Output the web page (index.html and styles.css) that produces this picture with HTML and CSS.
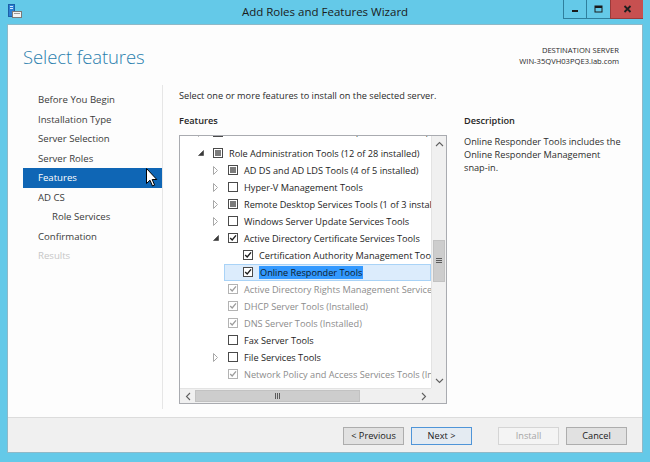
FILE: index.html
```html
<!DOCTYPE html>
<html>
<head>
<meta charset="utf-8">
<title>Add Roles and Features Wizard</title>
<link rel="stylesheet" href="styles.css">
</head>
<body>
<div class="window">
  <div class="titlebar">
    <div class="tb-left">
      <svg class="app-icon" width="14" height="14" viewBox="0 0 14 14">
        <rect x="0.5" y="0.5" width="6" height="12" fill="#2d7fd3" stroke="#1b5fa8"/>
        <rect x="2" y="2" width="3" height="1" fill="#cfe6ff"/>
        <rect x="2" y="4" width="3" height="1" fill="#cfe6ff"/>
        <rect x="4.5" y="7.5" width="9" height="6" fill="#f4f4f4" stroke="#7a7a7a"/>
        <rect x="6" y="9" width="6" height="1" fill="#9a9a9a"/>
      </svg>
    </div>
    <div class="title">Add Roles and Features Wizard</div>
    <div class="caption-btns">
      <div class="cbtn cmin"><svg width="8" height="8" viewBox="0 0 8 8"><rect x="1" y="5" width="6" height="2" fill="#1a1a1a"/></svg></div>
      <div class="cbtn cmax"><svg width="9" height="8" viewBox="0 0 9 8"><rect x="1" y="1" width="7" height="6" fill="none" stroke="#1a1a1a" stroke-width="1"/><rect x="1" y="1" width="7" height="2" fill="#1a1a1a"/></svg></div>
      <div class="cbtn cclose"><svg width="9" height="8" viewBox="0 0 9 8"><path d="M1.5 1 L7.5 7 M7.5 1 L1.5 7" stroke="#1f1f1f" stroke-width="1.8"/></svg></div>
    </div>
  </div>

  <div class="client">
    <div class="header">
      <h1 class="page-title">Select features</h1>
      <div class="dest">
        <div>DESTINATION SERVER</div>
        <div>WIN-35QVH03PQE3.lab.com</div>
      </div>
    </div>

    <div class="body">
      <nav class="nav">
        <div class="nav-item">Before You Begin</div>
        <div class="nav-item">Installation Type</div>
        <div class="nav-item">Server Selection</div>
        <div class="nav-item">Server Roles</div>
        <div class="nav-item active">Features</div>
        <div class="nav-item">AD CS</div>
        <div class="nav-item sub">Role Services</div>
        <div class="nav-item">Confirmation</div>
        <div class="nav-item disabled">Results</div>
      </nav>

      <main class="main">
        <p class="intro">Select one or more features to install on the selected server.</p>
        <div class="cols">
          <div class="features-col">
            <div class="label">Features</div>
            <div class="treebox">
              <div class="viewport">
                <div class="rows">
                  <div class="row l0 partial">
                    <span class="exp"><svg width="6" height="9" viewBox="0 0 6 9"><path d="M0.5 0.5 L4.5 4.5 L0.5 8.5 Z" fill="none" stroke="#a8a8a8"/></svg></span>
                    <span class="cb ind"><i></i></span>
                    <span class="txt">Feature Administration Tools (5 of 31 installed)</span>
                  </div>
                  <div class="row l0">
                    <span class="exp"><svg width="6" height="6" viewBox="0 0 6 6"><path d="M5.5 0.5 L5.5 5.5 L0.5 5.5 Z" fill="#3a3a3a" stroke="#3a3a3a" stroke-width="0.6"/></svg></span>
                    <span class="cb ind"><i></i></span>
                    <span class="txt">Role Administration Tools (12 of 28 installed)</span>
                  </div>
                  <div class="row l1">
                    <span class="exp"><svg width="6" height="9" viewBox="0 0 6 9"><path d="M0.5 0.5 L4.5 4.5 L0.5 8.5 Z" fill="none" stroke="#a8a8a8"/></svg></span>
                    <span class="cb ind"><i></i></span>
                    <span class="txt">AD DS and AD LDS Tools (4 of 5 installed)</span>
                  </div>
                  <div class="row l1">
                    <span class="exp"><svg width="6" height="9" viewBox="0 0 6 9"><path d="M0.5 0.5 L4.5 4.5 L0.5 8.5 Z" fill="none" stroke="#a8a8a8"/></svg></span>
                    <span class="cb"></span>
                    <span class="txt">Hyper-V Management Tools</span>
                  </div>
                  <div class="row l1">
                    <span class="exp"><svg width="6" height="9" viewBox="0 0 6 9"><path d="M0.5 0.5 L4.5 4.5 L0.5 8.5 Z" fill="none" stroke="#a8a8a8"/></svg></span>
                    <span class="cb ind"><i></i></span>
                    <span class="txt">Remote Desktop Services Tools (1 of 3 installed)</span>
                  </div>
                  <div class="row l1">
                    <span class="exp"><svg width="6" height="9" viewBox="0 0 6 9"><path d="M0.5 0.5 L4.5 4.5 L0.5 8.5 Z" fill="none" stroke="#a8a8a8"/></svg></span>
                    <span class="cb"></span>
                    <span class="txt">Windows Server Update Services Tools</span>
                  </div>
                  <div class="row l1">
                    <span class="exp"><svg width="6" height="6" viewBox="0 0 6 6"><path d="M5.5 0.5 L5.5 5.5 L0.5 5.5 Z" fill="#3a3a3a" stroke="#3a3a3a" stroke-width="0.6"/></svg></span>
                    <span class="cb"><svg width="8" height="8" viewBox="0 0 8 8"><path d="M1.2 4 L3.2 6 L7 1.4" fill="none" stroke="#1e1e1e" stroke-width="1.4"/></svg></span>
                    <span class="txt">Active Directory Certificate Services Tools</span>
                  </div>
                  <div class="row l2">
                    <span class="exp"></span>
                    <span class="cb"><svg width="8" height="8" viewBox="0 0 8 8"><path d="M1.2 4 L3.2 6 L7 1.4" fill="none" stroke="#1e1e1e" stroke-width="1.4"/></svg></span>
                    <span class="txt">Certification Authority Management Tools</span>
                  </div>
                  <div class="row l2 selected">
                    <span class="exp"></span>
                    <span class="cb"><svg width="8" height="8" viewBox="0 0 8 8"><path d="M1.2 4 L3.2 6 L7 1.4" fill="none" stroke="#1e1e1e" stroke-width="1.4"/></svg></span>
                    <span class="txt"><span class="sel-text">Online Responder Tools</span></span>
                  </div>
                  <div class="row l1 dis">
                    <span class="exp"></span>
                    <span class="cb"><svg width="8" height="8" viewBox="0 0 8 8"><path d="M1.2 4 L3.2 6 L7 1.4" fill="none" stroke="#9d9d9d" stroke-width="1.3"/></svg></span>
                    <span class="txt">Active Directory Rights Management Services Tools (Installed)</span>
                  </div>
                  <div class="row l1 dis">
                    <span class="exp"></span>
                    <span class="cb"><svg width="8" height="8" viewBox="0 0 8 8"><path d="M1.2 4 L3.2 6 L7 1.4" fill="none" stroke="#9d9d9d" stroke-width="1.3"/></svg></span>
                    <span class="txt">DHCP Server Tools (Installed)</span>
                  </div>
                  <div class="row l1 dis">
                    <span class="exp"></span>
                    <span class="cb"><svg width="8" height="8" viewBox="0 0 8 8"><path d="M1.2 4 L3.2 6 L7 1.4" fill="none" stroke="#9d9d9d" stroke-width="1.3"/></svg></span>
                    <span class="txt">DNS Server Tools (Installed)</span>
                  </div>
                  <div class="row l1">
                    <span class="exp"></span>
                    <span class="cb"></span>
                    <span class="txt">Fax Server Tools</span>
                  </div>
                  <div class="row l1">
                    <span class="exp"><svg width="6" height="9" viewBox="0 0 6 9"><path d="M0.5 0.5 L4.5 4.5 L0.5 8.5 Z" fill="none" stroke="#a8a8a8"/></svg></span>
                    <span class="cb"></span>
                    <span class="txt">File Services Tools</span>
                  </div>
                  <div class="row l1 dis">
                    <span class="exp"></span>
                    <span class="cb"><svg width="8" height="8" viewBox="0 0 8 8"><path d="M1.2 4 L3.2 6 L7 1.4" fill="none" stroke="#9d9d9d" stroke-width="1.3"/></svg></span>
                    <span class="txt">Network Policy and Access Services Tools (Installed)</span>
                  </div>
                </div>
              </div>
              <div class="vscroll">
                <div class="sb-btn"><svg width="9" height="6" viewBox="0 0 9 6"><path d="M1 5 L4.5 1.5 L8 5" fill="none" stroke="#606060" stroke-width="1.1"/></svg></div>
                <div class="vtrack">
                  <div class="vthumb"><svg width="6" height="6" viewBox="0 0 6 6"><path d="M0 0.5 H6 M0 2.5 H6 M0 4.5 H6" stroke="#5a5a5a" stroke-width="1"/></svg></div>
                </div>
                <div class="sb-btn"><svg width="9" height="6" viewBox="0 0 9 6"><path d="M1 1 L4.5 4.5 L8 1" fill="none" stroke="#606060" stroke-width="1.1"/></svg></div>
              </div>
              <div class="hscroll">
                <div class="sb-btn"><svg width="6" height="9" viewBox="0 0 6 9"><path d="M5 1 L1.5 4.5 L5 8" fill="none" stroke="#606060" stroke-width="1.1"/></svg></div>
                <div class="htrack">
                  <div class="hthumb"><svg width="6" height="6" viewBox="0 0 6 6"><path d="M0.5 0 V6 M2.5 0 V6 M4.5 0 V6" stroke="#5a5a5a" stroke-width="1"/></svg></div>
                </div>
                <div class="sb-btn"><svg width="6" height="9" viewBox="0 0 6 9"><path d="M1 1 L4.5 4.5 L1 8" fill="none" stroke="#606060" stroke-width="1.1"/></svg></div>
              </div>
              <div class="corner"></div>
            </div>
          </div>
          <div class="desc-col">
            <div class="label">Description</div>
            <p class="desc">Online Responder Tools includes the Online Responder Management <span class="nowrap">snap-in.</span></p>
          </div>
        </div>
      </main>
    </div>

    <div class="footer">
      <button class="btn">&lt; Previous</button>
      <button class="btn default">Next &gt;</button>
      <button class="btn disabled-btn">Install</button>
      <button class="btn">Cancel</button>
    </div>
  </div>

  <svg class="cursor" width="12" height="19" viewBox="0 0 12 19">
    <path d="M0.5 0.5 L0.5 15.5 L4 12.2 L6.5 18 L8.6 17.1 L6.2 11.5 L10.8 11.5 Z" fill="#fff" stroke="#000" stroke-width="1" stroke-linejoin="round"/>
  </svg>
</div>
</body>
</html>
```

FILE: styles.css
```css
* { box-sizing: border-box; }
html, body { margin: 0; padding: 0; }
body {
  width: 650px;
  height: 462px;
  overflow: hidden;
  background: #64c9e8;
  font-family: "Open Sans", "Noto Sans", "DejaVu Sans", sans-serif;
}

.window {
  position: relative;
  width: 650px;
  height: 462px;
  background: #64c9e8;
  padding: 0 7px 9px 7px;
  display: flex;
  flex-direction: column;
}

/* Title bar */
.titlebar {
  height: 24px;
  flex: none;
  display: grid;
  grid-template-columns: 1fr auto 1fr;
  align-items: start;
}
.tb-left { display: flex; }
.app-icon { margin: 4px 0 0 1px; display: block; }
.title {
  font-size: 11.5px;
  line-height: 16px;
  padding-top: 4px;
  color: #1b1b1b;
  white-space: nowrap;
}
.caption-btns {
  justify-self: end;
  display: flex;
  height: 19px;
}
.cbtn {
  height: 19px;
  display: flex;
  align-items: center;
  justify-content: center;
  border-bottom: 1px solid #2f7f9d;
  border-left: 1px solid #2f7f9d;
}
.cmin { width: 23px; }
.cmax { width: 24px; }
.cclose { width: 33px; background: #c75050; border-color: #9a3a3a; }

/* Client area */
.client {
  flex: 1;
  display: flex;
  flex-direction: column;
  background: #fdfdfd;
  border: 1px solid #8fb9c8;
}

.header {
  height: 60px;
  flex: none;
  display: flex;
  justify-content: space-between;
  align-items: flex-start;
  padding: 0 23px 0 15px;
}
.page-title {
  margin: 20px 0 0 0;
  font-size: 18.5px;
  line-height: 24px;
  font-weight: 300;
  color: #2b7fad;
  letter-spacing: -0.1px;
}
.dest {
  margin-top: 20px;
  text-align: right;
  font-size: 7.6px;
  line-height: 10.5px;
  color: #2a2a2a;
}

.body {
  flex: 1;
  display: flex;
  min-height: 0;
}

/* Left nav */
.nav {
  width: 155px;
  flex: none;
  padding-top: 5px;
  margin-bottom: 8px;
  border-right: 1px solid #e6e6e6;
}
.nav-item {
  height: 19.5px;
  line-height: 19.5px;
  margin-left: 15px;
  padding-left: 15px;
  font-size: 9.6px;
  color: #3b3b3b;
  white-space: nowrap;
}
.nav-item.sub { padding-left: 29px; }
.nav-item.active { background: #0f66b5; color: #fff; }
.nav-item.disabled { color: #c6c6c6; }

/* Main */
.main {
  flex: 1;
  padding: 4px 0 0 16px;
  font-size: 9.2px;
  color: #262626;
}
.intro {
  margin: 0;
  line-height: 13px;
  font-size: 9.2px;
  color: #2a2a2a;
}
.cols {
  display: flex;
  gap: 17px;
  margin-top: 11.5px;
}
.features-col { width: 268px; flex: none; }
.label {
  font-weight: 600;
  font-size: 9.2px;
  line-height: 13px;
  color: #262626;
}

.treebox {
  margin-top: 8.5px;
  width: 268px;
  height: 269px;
  border: 1px solid #a9abb0;
  display: grid;
  grid-template-columns: 1fr 15px;
  grid-template-rows: 1fr 15px;
  background: #fff;
}
.viewport {
  overflow: hidden;
  position: relative;
}
.rows { margin-top: -8.5px; }
.row {
  display: flex;
  align-items: center;
  height: 17px;
  white-space: nowrap;
  font-size: 9.2px;
  color: #1e1e1e;
}
.row.l0 { margin-left: 14px; }
.row.l1 { margin-left: 29px; }
.row.l2 { margin-left: 44px; }
.row.partial > * { transform: translateY(-4px); }
.exp {
  width: 19px;
  flex: none;
  display: flex;
  align-items: center;
  padding-left: 4px;
}
.exp svg { display: block; }
.cb {
  width: 10px;
  height: 10px;
  flex: none;
  border: 1px solid #4a4a4a;
  background: #fff;
  display: flex;
  align-items: center;
  justify-content: center;
}
.cb svg { display: block; }
.cb.ind i {
  display: block;
  width: 6px;
  height: 6px;
  background: #7c7c7c;
}
.txt { margin-left: 6px; }
.row.dis { color: #8c8c8c; }
.row.dis .cb { border-color: #b3b3b3; }
.row.selected {
  background: #dcecfc;
  box-shadow: inset 0 0 0 1px #a9d3f7;
}
.sel-text {
  background: #3399ff;
  color: #0d1a2b;
  padding: 0 1px;
}

/* Scrollbars */
.vscroll {
  display: flex;
  flex-direction: column;
  background: #f0f0f0;
  border-left: 1px solid #e3e3e3;
}
.sb-btn {
  flex: none;
  width: 14px;
  height: 15px;
  display: flex;
  align-items: center;
  justify-content: center;
}
.vtrack { flex: 1; }
.vthumb {
  margin: 89px 1px 0 1px;
  height: 42px;
  background: #cdcdcd;
  border: 1px solid #c2c2c2;
  display: flex;
  align-items: center;
  justify-content: center;
}
.hscroll {
  display: flex;
  background: #f0f0f0;
  border-top: 1px solid #e3e3e3;
}
.hscroll .sb-btn { width: 15px; height: 14px; }
.htrack { flex: 1; display: flex; }
.hthumb {
  margin: 1px 0;
  width: 165px;
  background: #cdcdcd;
  border: 1px solid #c2c2c2;
  display: flex;
  align-items: center;
  justify-content: center;
}
.corner { background: #f0f0f0; }

/* Description */
.desc-col { width: 170px; flex: none; }
.desc {
  margin: 8px 0 0 0;
  font-size: 9.2px;
  line-height: 13px;
  color: #2e2e2e;
}
.nowrap { white-space: nowrap; }

/* Footer */
.footer {
  height: 35px;
  flex: none;
  background: #f0f0f0;
  border-top: 1px solid #dcdcdc;
  display: flex;
  justify-content: flex-end;
  align-items: flex-start;
  padding: 9px 15px 0 0;
}
.btn {
  width: 61px;
  height: 18px;
  padding: 0;
  margin: 0 0 0 7px;
  font-family: "Open Sans", "Noto Sans", sans-serif;
  font-size: 9.2px;
  line-height: 16px;
  color: #1a1a1a;
  background: #e1e1e1;
  border: 1px solid #adadad;
  border-radius: 0;
}
.btn.default { border-color: #4f95d8; background: #e4ebf2; }
.btn.disabled-btn {
  margin-left: 26px;
  color: #a6a6a6;
  background: #f4f4f4;
  border-color: #d5d5d5;
}

/* Mouse pointer overlay */
.cursor {
  position: absolute;
  left: 146px;
  top: 168px;
}
```
